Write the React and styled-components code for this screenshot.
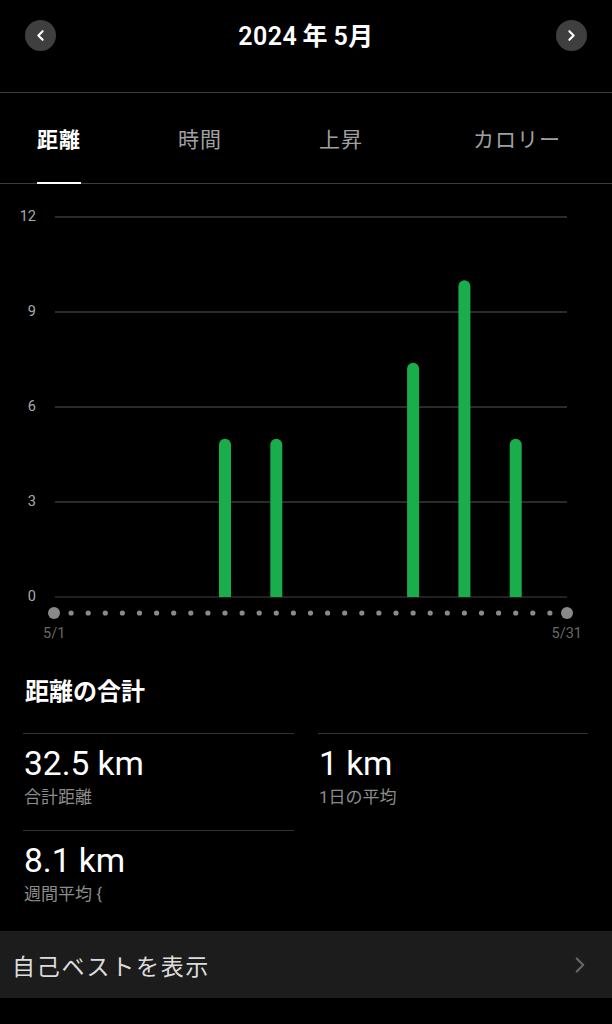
import React from "react";
import styled, { createGlobalStyle } from "styled-components";
import { ChevronLeft, ChevronRight } from "lucide-react";

const GlobalStyle = createGlobalStyle`
  html, body {
    margin: 0;
    padding: 0;
    background: #000;
  }
  body {
    font-family: Roboto, "Noto Sans CJK JP", sans-serif;
    color: #fff;
  }
`;

const Page = styled.div`
  width: 612px;
  min-height: 1024px;
  background: #000;
  display: flex;
  flex-direction: column;
`;

const Header = styled.header`
  height: 93px;
  box-sizing: border-box;
  padding: 20px 25px 0 25px;
  display: flex;
  align-items: flex-start;
  justify-content: space-between;
  border-bottom: 1px solid #3c3c3c;
`;

const RoundButton = styled.button`
  width: 31px;
  height: 31px;
  border-radius: 50%;
  border: none;
  background: #3f3f3f;
  color: #fff;
  display: flex;
  align-items: center;
  justify-content: center;
  padding: 0;
`;

const Title = styled.h1`
  margin: 0;
  font-size: 25px;
  font-weight: 600;
  line-height: 33px;
  letter-spacing: 0.4px;
`;

const Tabs = styled.nav`
  height: 91px;
  box-sizing: border-box;
  padding: 0 51px 0 37px;
  display: flex;
  align-items: stretch;
  gap: 97px;
  border-bottom: 1px solid #3c3c3c;
`;

const Tab = styled.div`
  display: flex;
  align-items: center;
  position: relative;
  font-size: 21px;
  font-weight: ${(p) => (p.active ? 700 : 400)};
  color: ${(p) => (p.active ? "#fff" : "#a0a0a0")};
  letter-spacing: 1px;
  margin-left: ${(p) => (p.last ? "auto" : "0")};

  &::after {
    content: "";
    display: ${(p) => (p.active ? "block" : "none")};
    position: absolute;
    left: 0;
    right: 0;
    bottom: -1px;
    height: 2px;
    background: #fff;
  }
`;

const ChartSvg = styled.svg`
  display: block;
  width: 612px;
  height: 466px;
  font-family: Roboto, sans-serif;
`;

const Summary = styled.section`
  padding: 27px 24px 0 23px;
`;

const SummaryTitle = styled.h2`
  margin: 0 0 26px 2px;
  font-size: 24px;
  font-weight: 700;
  line-height: 30px;
`;

const StatGrid = styled.div`
  display: grid;
  grid-template-columns: 271px 270px;
  column-gap: 24px;
`;

const Stat = styled.div`
  border-top: 1px solid #333;
  padding: 13px 0 ${(p) => (p.lastRow ? "26px" : "22px")} 1px;
  display: flex;
  flex-direction: column;
`;

const StatValue = styled.div`
  font-size: 33.5px;
  line-height: 34px;
  color: #fff;
`;

const StatLabel = styled.div`
  margin-top: 5px;
  font-size: 17px;
  line-height: 22px;
  color: #8c8c8c;
`;

const BestRow = styled.div`
  height: 67px;
  background: #1c1c1c;
  display: flex;
  align-items: center;
  justify-content: space-between;
  padding: 0 19px 0 12px;
`;

const BestText = styled.span`
  font-size: 23px;
  letter-spacing: 1.7px;
  color: #dcdcdc;
`;

const days = 31;
const values = { 11: 5, 14: 5, 22: 7.4, 25: 10, 28: 5 };
const x0 = 54;
const x1 = 567;
const step = (x1 - x0) / (days - 1);
const base = 413;
const unit = 95 / 3;
const grid = [12, 9, 6, 3, 0];

function Bar({ cx, v }) {
  const w = 12;
  const r = w / 2;
  const top = base - v * unit;
  const d = `M${cx - r},${base} L${cx - r},${top + r} A${r},${r} 0 0 1 ${cx + r},${top + r} L${cx + r},${base} Z`;
  return <path d={d} fill="#1aad4b" />;
}

function Chart() {
  return (
    <ChartSvg viewBox="0 0 612 466">
      {grid.map((g) => {
        const y = base - g * unit;
        return (
          <g key={g}>
            <line x1={55} x2={567} y1={y} y2={y} stroke={g === 0 ? "#2e2e2e" : "#3a3a3a"} strokeWidth="1.3" />
            <text x={36} y={y} textAnchor="end" dominantBaseline="middle" fontSize="14.5" fill="#aaa">
              {g}
            </text>
          </g>
        );
      })}
      {Array.from({ length: days }, (_, i) => {
        const big = i === 0 || i === days - 1;
        return <circle key={i} cx={x0 + step * i} cy={429} r={big ? 6 : 2.6} fill="#8a8a8a" />;
      })}
      {Object.entries(values).map(([day, v]) => (
        <Bar key={day} cx={x0 + step * (Number(day) - 1)} v={v} />
      ))}
      <text x={43} y={450} dominantBaseline="middle" fontSize="14.5" fill="#686868">
        5/1
      </text>
      <text x={582} y={450} textAnchor="end" dominantBaseline="middle" fontSize="14.5" fill="#686868">
        5/31
      </text>
    </ChartSvg>
  );
}

const tabs = ["距離", "時間", "上昇", "カロリー"];

export default function App() {
  return (
    <Page>
      <GlobalStyle />
      <Header>
        <RoundButton aria-label="前の月">
          <ChevronLeft size={17} strokeWidth={3} />
        </RoundButton>
        <Title>2024{"\u2009"}年{"\u2009"}5月</Title>
        <RoundButton aria-label="次の月">
          <ChevronRight size={17} strokeWidth={3} />
        </RoundButton>
      </Header>
      <Tabs>
        {tabs.map((t, i) => (
          <Tab key={t} active={i === 0} last={i === tabs.length - 1}>
            {t}
          </Tab>
        ))}
      </Tabs>
      <Chart />
      <Summary>
        <SummaryTitle>距離の合計</SummaryTitle>
        <StatGrid>
          <Stat>
            <StatValue>32.5 km</StatValue>
            <StatLabel>合計距離</StatLabel>
          </Stat>
          <Stat>
            <StatValue>1 km</StatValue>
            <StatLabel>1日の平均</StatLabel>
          </Stat>
          <Stat lastRow>
            <StatValue>8.1 km</StatValue>
            <StatLabel>週間平均 {"{"}</StatLabel>
          </Stat>
        </StatGrid>
      </Summary>
      <BestRow>
        <BestText>自己ベストを表示</BestText>
        <ChevronRight size={26} strokeWidth={2} color="#666" />
      </BestRow>
    </Page>
  );
}
